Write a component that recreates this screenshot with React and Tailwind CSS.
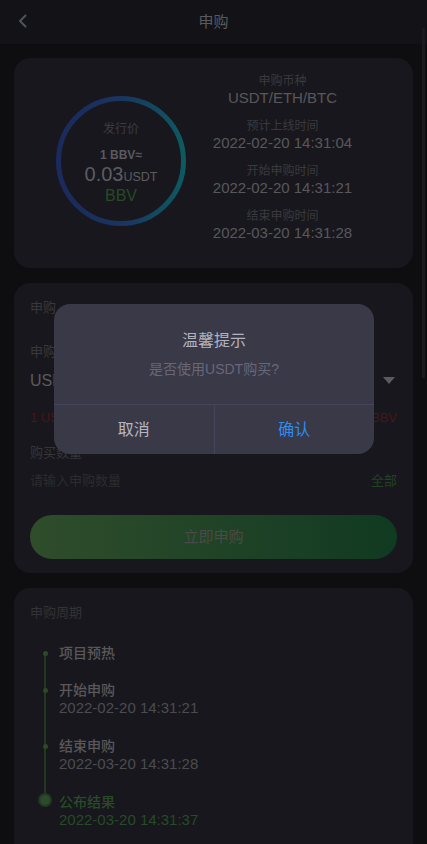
import React from "react";

const F = { fontFamily: '"Liberation Sans", "Noto Sans CJK SC", sans-serif' };

function Ring() {
  return (
    <svg width="130" height="130" viewBox="0 0 130 130" className="absolute inset-0">
      <defs>
        <linearGradient id="rg" x1="0" y1="0" x2="1" y2="0">
          <stop offset="0%" stopColor="#1a2a5c" />
          <stop offset="50%" stopColor="#1a3460" />
          <stop offset="100%" stopColor="#0d5a60" />
        </linearGradient>
      </defs>
      <circle cx="65" cy="65" r="62.5" fill="none" stroke="url(#rg)" strokeWidth="5" />
    </svg>
  );
}

function InfoPair({ label, value }) {
  return (
    <div className="flex flex-col items-center">
      <div className="text-[12px] leading-[14px] text-[#3a3a3e]">{label}</div>
      <div className="text-[15px] leading-[20px] text-[#58585c]">{value}</div>
    </div>
  );
}

function TItem({ title, date, active }) {
  return (
    <div className="flex flex-col">
      <div className={`text-[14px] leading-[18px] font-medium ${active ? "text-[#2a4b2a]" : "text-[#58585c]"}`}>{title}</div>
      {date && (
        <div className={`text-[15px] leading-[18px] ${active ? "text-[#274a27]" : "text-[#4c4c50]"}`}>{date}</div>
      )}
    </div>
  );
}

export default function App() {
  return (
    <div style={F} className="relative min-h-[844px] w-[427px] overflow-hidden bg-[#0e0e11]">
      {/* header */}
      <div className="relative flex h-[44px] items-center justify-center bg-[#131317]">
        <svg className="absolute left-[17px] top-[14px]" width="12" height="14" viewBox="0 0 12 14">
          <path d="M8.5 1.5 L3 7 L8.5 12.5" fill="none" stroke="#4e535a" strokeWidth="2" strokeLinecap="round" strokeLinejoin="round" />
        </svg>
        <div className="text-[15px] text-[#5a5a5e]">申购</div>
      </div>

      <div className="flex flex-col gap-[15px] px-[14px] pt-[14px]">
        {/* card 1 */}
        <div className="flex h-[210px] rounded-[16px] bg-[#18171d] pl-[42px] pr-[34px]">
          <div className="pt-[38px]">
            <div className="relative h-[130px] w-[130px]">
              <Ring />
              <div className="absolute inset-0 flex flex-col items-center pt-[25px]">
                <div className="text-[12px] leading-[16px] text-[#3c3c40]">发行价</div>
                <div className="mt-[10px] text-[12px] leading-[16px] font-bold text-[#5a5a5e]">1 BBV≈</div>
                <div className="mt-[1px] flex items-baseline leading-[20px] text-[#5c5c60]">
                  <span className="text-[20px]">0.03</span>
                  <span className="text-[12.5px]">USDT</span>
                </div>
                <div className="text-[16px] leading-[18px] text-[#274a25]">BBV</div>
              </div>
            </div>
          </div>
          <div className="flex flex-1 flex-col items-center gap-[11px] pt-[16px]">
            <InfoPair label="申购币种" value="USDT/ETH/BTC" />
            <InfoPair label="预计上线时间" value="2022-02-20 14:31:04" />
            <InfoPair label="开始申购时间" value="2022-02-20 14:31:21" />
            <InfoPair label="结束申购时间" value="2022-03-20 14:31:28" />
          </div>
        </div>

        {/* card 2 */}
        <div className="flex h-[290px] flex-col rounded-[16px] bg-[#18171d] px-[16px] pt-[16px]">
          <div className="text-[13px] leading-[18px] text-[#38383c]">申购</div>
          <div className="mt-[26px] text-[13px] leading-[18px] text-[#38383c]">申购币种</div>
          <div className="mt-[10px] flex items-center justify-between">
            <div className="text-[16px] leading-[20px] text-[#5a5a5e]">USDT</div>
            <svg width="12" height="8" viewBox="0 0 12 8" className="mr-[2px]">
              <path d="M0 0 L12 0 L6 7 Z" fill="#5a5a60" />
            </svg>
          </div>
          <div className="mt-[18px] flex items-center justify-between text-[13px] leading-[18px] text-[#4a1616]">
            <span>1 USDT</span>
            <span>≈ 33.3333 BBV</span>
          </div>
          <div className="mt-[17px] text-[13px] leading-[18px] text-[#363639]">购买数量</div>
          <div className="mt-[10px] flex items-center justify-between text-[13px] leading-[18px]">
            <span className="text-[#2c2c2f]">请输入申购数量</span>
            <span className="text-[#244224]">全部</span>
          </div>
          <div className="mt-[25px] flex h-[44px] items-center justify-center rounded-full bg-gradient-to-r from-[#2f4d2b] to-[#103a22] text-[15px] text-[#4a4a4a]">
            立即申购
          </div>
        </div>

        {/* card 3 */}
        <div className="flex h-[300px] flex-col rounded-[16px] bg-[#18171d] px-[16px] pt-[16px]">
          <div className="text-[13px] leading-[18px] text-[#333336]">申购周期</div>
          <div className="relative mt-[22px] pl-[29px]">
            <div className="absolute left-[14px] top-[9px] h-[149px] w-[2px] bg-[#22381f]" />
            <div className="absolute left-[12.5px] top-[6.5px] h-[5px] w-[5px] rounded-full bg-[#2b4a29]" />
            <div className="absolute left-[12.5px] top-[44px] h-[5px] w-[5px] rounded-full bg-[#2b4a29]" />
            <div className="absolute left-[12.5px] top-[100px] h-[5px] w-[5px] rounded-full bg-[#2b4a29]" />
            <div className="absolute left-[8px] top-[149px] flex h-[14px] w-[14px] items-center justify-center rounded-full bg-[#213821]">
              <div className="h-[10px] w-[10px] rounded-full bg-[#2d4a2b]" />
            </div>
            <div className="flex flex-col">
              <TItem title="项目预热" />
              <div className="mt-[19px]"><TItem title="开始申购" date="2022-02-20 14:31:21" /></div>
              <div className="mt-[20px]"><TItem title="结束申购" date="2022-03-20 14:31:28" /></div>
              <div className="mt-[20px]"><TItem title="公布结果" date="2022-03-20 14:31:37" active /></div>
            </div>
          </div>
        </div>
      </div>

      {/* scroll indicator */}
      <div className="absolute left-[422px] top-[28px] h-[350px] w-[3px] bg-[#1a1a1f]" />

      {/* dialog */}
      <div className="absolute left-[54px] top-[304px] flex h-[150px] w-[320px] flex-col overflow-hidden rounded-[16px] bg-[#3a3947]">
        <div className="flex h-[100px] flex-col items-center pt-[27px]">
          <div className="text-[16px] leading-[20px] text-[#b3b3bd]">温馨提示</div>
          <div className="mt-[9px] text-[14px] leading-[18px] text-[#68677a]">是否使用USDT购买?</div>
        </div>
        <div className="flex flex-1 border-t border-[#45445a]">
          <div className="flex flex-1 items-center justify-center border-r border-[#45445a] text-[16px] text-[#b7b7c1]">取消</div>
          <div className="flex flex-1 items-center justify-center text-[16px] text-[#2d8cee]">确认</div>
        </div>
      </div>
    </div>
  );
}
